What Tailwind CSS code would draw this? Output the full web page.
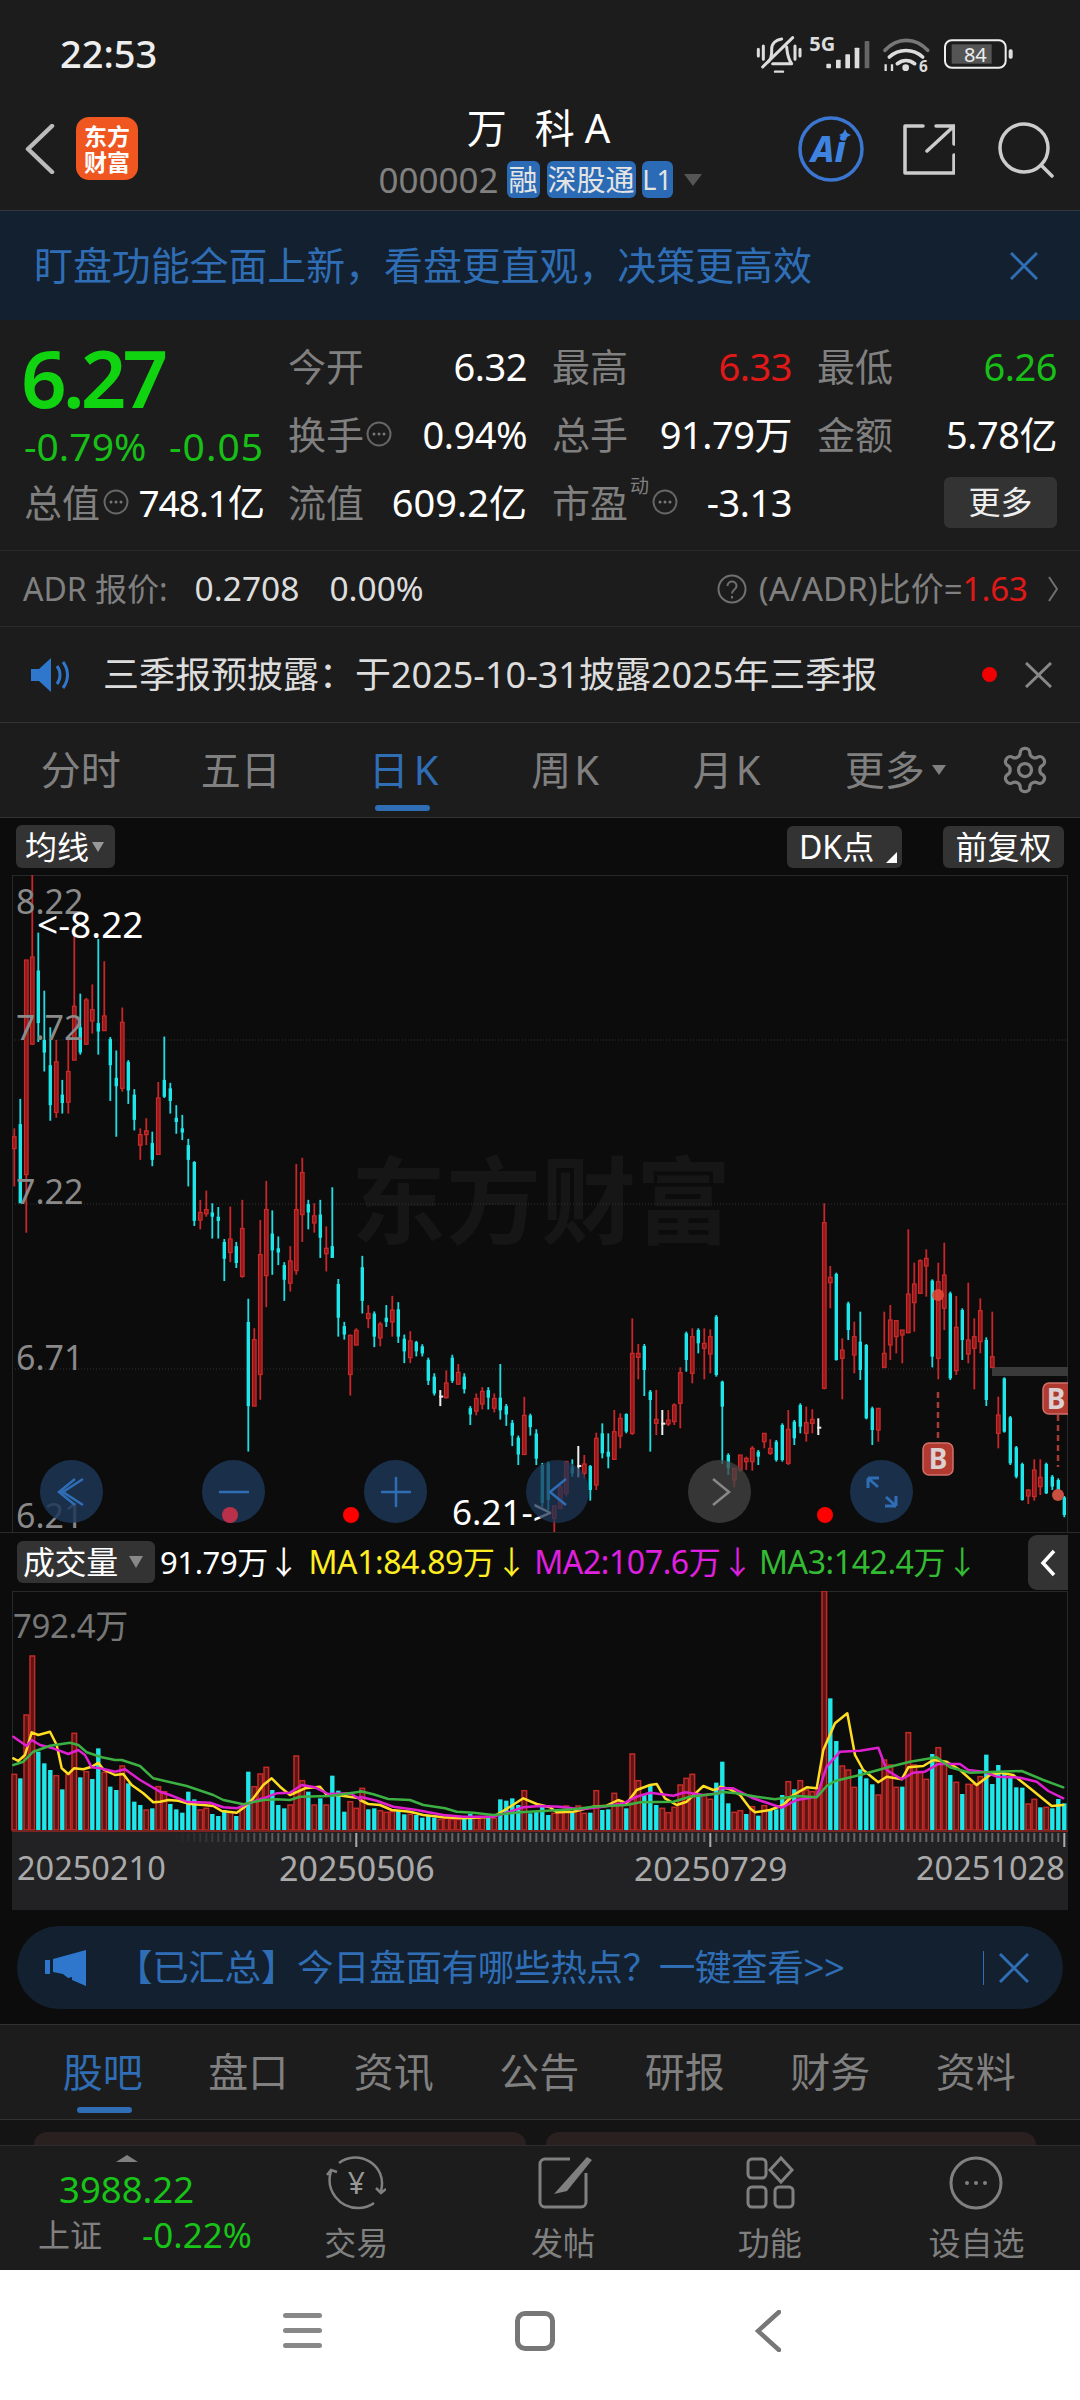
<!DOCTYPE html>
<html lang="zh-CN">
<head>
    <meta charset="UTF-8">
    <meta name="viewport" content="width=device-width, initial-scale=1.0">
    <title>万科A</title>
    <script src="https://cdn.jsdelivr.net/npm/@tailwindcss/browser@4"></script>
</head>
<body class="w-[1080px] h-[2400px] overflow-hidden bg-[#1c1c1c] text-white leading-none [font-family:'Noto_Sans','Noto_Sans_CJK_SC',sans-serif]">

    <svg class="hidden">
        <symbol id="dots" viewBox="0 0 26 26">
            <circle cx="13" cy="13" r="11.5" fill="none" stroke="#666" stroke-width="2"/>
            <circle cx="8" cy="13" r="1.5" fill="#777"/><circle cx="13" cy="13" r="1.5" fill="#777"/><circle cx="18" cy="13" r="1.5" fill="#777"/>
        </symbol>
    </svg>

    <!-- status bar + title -->
    <header class="h-[211px] border-b border-[#34383d]">
        <div class="h-[106px] flex items-center justify-between pl-[60px]">
            <span class="text-[38px] font-medium text-[#eee]">22:53</span>
            <svg class="w-[340px] h-[45px]" viewBox="0 0 1020 135">
                <g fill="none" stroke="#ddd" stroke-width="9" stroke-linecap="round" stroke-linejoin="round">
                    <path d="M55 55v20M70 45v40M165 45v40M180 55v20"/>
                    <path d="M85 92c12-12 10-25 10-38 0-16 12-28 30-30M140 48c2 18 2 32 15 50H98"/>
                    <path d="M68 108 158 20"/>
                    <path d="M105 122h24" stroke-width="7"/>
                </g>
                <text x="208" y="60" font-size="60" font-weight="700" fill="#ddd">5G</text>
                <g fill="#ddd">
                    <rect x="259" y="98" width="14" height="14" rx="3"/><rect x="288" y="86" width="14" height="26" rx="2"/><rect x="316" y="70" width="14" height="42" rx="2"/><rect x="344" y="50" width="14" height="62" rx="2"/>
                    <rect x="374" y="30" width="14" height="82" rx="2" fill="#666"/>
                </g>
                <g fill="none" stroke-width="11" stroke-linecap="round">
                    <path d="M435 58c36-40 92-40 128 0" stroke="#777"/>
                    <path d="M448 78c28-26 72-26 100 0" stroke="#ddd"/>
                    <path d="M472 98c16-12 36-12 52 0" stroke="#ddd"/>
                </g>
                <circle cx="497" cy="110" r="10" fill="#ddd"/>
                <path d="M437 100v20M456 100v20" stroke="#ddd" stroke-width="7" fill="none"/>
                <text x="537" y="122" font-size="46" font-weight="700" fill="#ddd">6</text>
                <rect x="615" y="28" width="182" height="82" rx="20" fill="none" stroke="#eee" stroke-width="6"/>
                <rect x="635" y="40" width="120" height="58" fill="#555"/>
                <rect x="806" y="55" width="12" height="28" rx="5" fill="#ddd"/>
                <text x="706" y="92" text-anchor="middle" font-size="60" fill="#eee">84</text>
            </svg>
        </div>
        <div class="relative h-[104px] grid grid-cols-[1fr_auto_1fr]">
            <div class="flex items-start pl-[25px] pt-[11px]">
                <svg class="w-[30px] h-[50px] mt-[7px]" viewBox="0 0 30 50" fill="none" stroke="#bbb" stroke-width="4.5" stroke-linecap="round" stroke-linejoin="round"><path d="M27 2 3 25l24 23"/></svg>
                <div class="ml-[21px] w-[62px] h-[63px] rounded-[13px] bg-[#f0561f] flex flex-col items-center justify-center text-[23px] font-bold leading-[26px] text-white"><span>东方</span><span>财富</span></div>
            </div>
            <div class="flex flex-col items-center pt-[1px]">
                <div class="h-[42px] flex items-center text-[40px] text-white -ml-[3px]">万<span class="ml-[28px]">科</span><span class="ml-[10px]">A</span></div>
                <div class="mt-[12px] flex items-center h-[37px]">
                    <span class="text-[35px] text-[#808080] mr-[8px]">000002</span>
                    <span class="h-[37px] px-[2px] rounded-[6px] bg-[#2b6ab5] text-[29px] text-[#e4e4e4] flex items-center">融</span>
                    <span class="h-[37px] ml-[7px] px-[1px] rounded-[6px] bg-[#2b6ab5] text-[29px] text-[#e4e4e4] flex items-center">深股通</span>
                    <span class="h-[37px] ml-[6px] w-[31px] justify-center rounded-[6px] bg-[#2b6ab5] text-[27px] text-[#e4e4e4] flex items-center">L1</span>
                    <span class="ml-[11px] w-0 h-0 border-x-[9px] border-x-transparent border-t-[12px] border-t-[#555]"></span>
                </div>
            </div>
            <div class="flex items-start justify-end pt-[10px] pr-[26px]">
                <svg class="w-[66px] h-[66px]" viewBox="0 0 66 66">
                    <circle cx="33" cy="33" r="31" fill="none" stroke="#3b76d0" stroke-width="3.5"/>
                    <text x="13" y="46" font-size="36" font-weight="800" font-style="italic" fill="#3f83e0">Ai</text>
                    <path d="M47 13l2 4 4 2-4 2-2 4-2-4-4-2 4-2z" fill="#3f83e0"/>
                </svg>
                <svg class="ml-[39px] mt-[7px] w-[52px] h-[52px]" viewBox="0 0 52 52" fill="none" stroke="#ccc" stroke-width="3.5" stroke-linecap="round" stroke-linejoin="round">
                    <path d="M20 3H2v47h49V32"/><path d="M24 28 51 3M33 3h18v18"/>
                </svg>
                <svg class="ml-[43px] mt-[6px] w-[56px] h-[56px]" viewBox="0 0 56 56" fill="none" stroke="#ccc" stroke-width="3.5" stroke-linecap="round">
                    <circle cx="26" cy="26" r="24"/><path d="m43 43 11 11"/>
                </svg>
            </div>
        </div>
    </header>

    <!-- feature banner -->
    <div class="h-[109px] bg-[#13202f] flex items-center justify-between pl-[34px] pr-[42px]">
        <span class="text-[38.9px] text-[#2f6db5]">盯盘功能全面上新，看盘更直观，决策更高效</span>
        <svg class="w-[28px] h-[28px]" viewBox="0 0 28 28" fill="none" stroke="#2f6db5" stroke-width="3"><path d="M1 1l26 26M27 1 1 27"/></svg>
    </div>

    <!-- quote -->
    <section class="h-[231px] flex pl-[24px] pt-[12px] border-b border-[#2a2a2a]">
        <div class="w-[240px] flex flex-col">
            <div class="h-[90px] flex items-center -ml-[3px] text-[80px] font-semibold tracking-[-4px] text-[#10d410]">6.27</div>
            <div class="h-[46px] flex items-center justify-between text-[39px] text-[#17bf17]"><span>-0.79%</span><span class="tracking-[1px]">-0.05</span></div>
            <div class="h-[68px] flex items-center text-[38px] text-[#808080]">
                总值<svg class="w-[26px] h-[26px] ml-[3px]"><use href="#dots"/></svg>
                <span class="ml-auto text-[37px] text-white tracking-[-1px]">748.1亿</span>
            </div>
        </div>
        <div class="ml-[24px] grid grid-cols-[239px_240px_240px] grid-rows-[68px_68px_68px] gap-x-[25px] text-[38px] text-[#808080]">
            <div class="flex items-center justify-between">今开<span class="text-[38px] text-white tracking-[-0.5px]">6.32</span></div>
            <div class="flex items-center justify-between">最高<span class="text-[38px] text-[#e01818] tracking-[-0.5px]">6.33</span></div>
            <div class="flex items-center justify-between">最低<span class="text-[38px] text-[#17bf17] tracking-[-0.5px]">6.26</span></div>
            <div class="flex items-center">换手<svg class="w-[26px] h-[26px] ml-[2px]"><use href="#dots"/></svg><span class="ml-auto text-[38px] text-white tracking-[-0.5px]">0.94%</span></div>
            <div class="flex items-center justify-between">总手<span class="text-[38px] text-white tracking-[-0.5px]">91.79万</span></div>
            <div class="flex items-center justify-between">金额<span class="text-[38px] text-white tracking-[-0.5px]">5.78亿</span></div>
            <div class="flex items-center">流值<span class="ml-auto text-[38px] text-white">609.2亿</span></div>
            <div class="relative flex items-center">市盈<span class="absolute left-[78px] top-[9px] text-[19px]">动</span><svg class="w-[26px] h-[26px] ml-[24px]"><use href="#dots"/></svg><span class="ml-auto text-[38px] text-white tracking-[-0.5px]">-3.13</span></div>
            <div class="flex items-center justify-end"><span class="w-[113px] h-[51px] rounded-[6px] bg-[#333] text-[32px] text-[#eee] flex items-center justify-center">更多</span></div>
        </div>
    </section>

    <!-- ADR -->
    <div class="h-[76px] flex items-center pl-[23px] pr-[22px] border-b border-[#2a2a2a] text-[32px] text-[#808080]">
        <span>ADR 报价:</span>
        <span class="ml-[27px] text-[33.5px] text-[#ddd]">0.2708</span>
        <span class="ml-[30px] text-[33.5px] text-[#ddd]">0.00%</span>
        <svg class="ml-auto w-[30px] h-[30px]" viewBox="0 0 30 30" fill="none" stroke="#707070" stroke-width="2"><circle cx="15" cy="15" r="13.5"/><path d="M10.5 12c0-6 9-6 9 0 0 4-4.500 3.500-4.500 7.500M15 22v2.500"/></svg>
        <span class="ml-[12px] text-[33px]">(A/ADR)比价=</span><span class="text-[33px] text-[#e01818]">1.63</span>
        <svg class="ml-[20px] w-[10px] h-[26px]" viewBox="0 0 10 26" fill="none" stroke="#707070" stroke-width="2"><path d="M1 1l8 12-8 12"/></svg>
    </div>

    <!-- notice -->
    <div class="h-[96px] flex items-center pl-[31px] pr-[28px] border-b border-[#333]">
        <svg class="w-[42px] h-[34px]" viewBox="0 0 42 34">
            <path d="M0 11h8L20 0v34L8 23H0z" fill="#2f77cc"/>
            <path d="M26 8c4 5 4 13 0 18M32 4c6 8 6 18 0 26" fill="none" stroke="#2f77cc" stroke-width="3"/>
        </svg>
        <span class="ml-[30px] text-[36px] text-[#ddd]">三季报预披露：于2025-10-31披露2025年三季报</span>
        <span class="ml-auto w-[15px] h-[15px] rounded-full bg-[#f00000]"></span>
        <svg class="ml-[28px] w-[27px] h-[26px]" viewBox="0 0 27 26" fill="none" stroke="#888" stroke-width="3"><path d="M1 1l25 24M26 1 1 25"/></svg>
    </div>

    <!-- period tabs -->
    <nav class="relative h-[95px] grid grid-cols-[repeat(6,161.5px)_111px] items-center border-b border-[#333] text-[40px] text-[#808080]">
        <span class="text-center">分时</span>
        <span class="text-center -ml-[3px]">五日</span>
        <span class="text-center text-[#2f6db5]">日<span class="ml-[5px]">K</span></span>
        <span class="text-center">周<span class="ml-[3px]">K</span></span>
        <span class="text-center">月<span class="ml-[3px]">K</span></span>
        <span class="flex items-center justify-center ml-[14px]">更多<i class="ml-[7px] w-0 h-0 border-x-[7px] border-x-transparent border-t-[10px] border-t-[#808080]"></i></span>
        <svg class="mx-auto w-[52px] h-[52px]" viewBox="0 0 24 24" fill="none" stroke="#808080" stroke-width="1.5"><path d="M12.22 2h-.44a2 2 0 0 0-2 2v.18a2 2 0 0 1-1 1.73l-.43.25a2 2 0 0 1-2 0l-.15-.08a2 2 0 0 0-2.730.73l-.22.38a2 2 0 0 0 .73 2.73l.15.1a2 2 0 0 1 1 1.72v.51a2 2 0 0 1-1 1.74l-.15.09a2 2 0 0 0-.73 2.73l.22.38a2 2 0 0 0 2.73.73l.15-.08a2 2 0 0 1 2 0l.43.25a2 2 0 0 1 1 1.73V20a2 2 0 0 0 2 2h.44a2 2 0 0 0 2-2v-.18a2 2 0 0 1 1-1.73l.43-.25a2 2 0 0 1 2 0l.15.08a2 2 0 0 0 2.73-.73l.22-.39a2 2 0 0 0-.73-2.73l-.15-.08a2 2 0 0 1-1-1.74v-.5a2 2 0 0 1 1-1.74l.15-.09a2 2 0 0 0 .73-2.73l-.22-.38a2 2 0 0 0-2.73-.73l-.15.08a2 2 0 0 1-2 0l-.43-.25a2 2 0 0 1-1-1.73V4a2 2 0 0 0-2-2z"/><circle cx="12" cy="12" r="3"/></svg>
        <span class="absolute left-[375px] top-[82px] w-[55px] h-[6px] rounded-full bg-[#2f6db5]"></span>
    </nav>

    <!-- chart toolbar -->
    <div class="h-[57px] bg-[#0c0c0c] flex items-center pl-[16px] pr-[16px] text-[32px] text-white">
        <span class="w-[99px] h-[43px] rounded-[6px] bg-[#333] flex items-center pl-[9px]">均线<i class="ml-[3px] w-0 h-0 border-x-[6px] border-x-transparent border-t-[10px] border-t-[#999]"></i></span>
        <span class="relative ml-auto w-[115px] h-[42px] rounded-[6px] bg-[#333] flex items-center pl-[12px]">DK点<i class="absolute right-[5px] bottom-[5px] w-0 h-0 border-l-[11px] border-l-transparent border-b-[11px] border-b-white"></i></span>
        <span class="ml-[41px] w-[121px] h-[42px] rounded-[6px] bg-[#333] flex items-center justify-center">前复权</span>
    </div>

    <!-- k-line chart -->
    <section class="relative h-[657px] bg-[#0c0c0c]">
        <span class="absolute left-[351px] top-[278px] text-[95px] font-bold text-[#161616]">东方财富</span>
        <svg id="kline" class="absolute inset-0 w-[1080px] h-[657px]" viewBox="0 875 1080 657"></svg>
        <span class="absolute left-[16px] top-[9px] text-[34px] text-[#8a8a8a]">8.22</span>
        <span class="absolute left-[16px] top-[135px] text-[34px] text-[#8a8a8a]">7.72</span>
        <span class="absolute left-[16px] top-[299px] text-[34px] text-[#8a8a8a]">7.22</span>
        <span class="absolute left-[16px] top-[465px] text-[34px] text-[#8a8a8a]">6.71</span>
        <span class="absolute left-[16px] top-[623px] text-[34px] text-[#8a8a8a]">6.21</span>
        <span class="absolute left-[37px] top-[30px] text-[37px] text-white">&lt;-8.22</span>
        <span class="absolute left-[452px] top-[619px] text-[35px] text-white">6.21-&gt;</span>
        <div class="absolute left-[40px] top-[585px] w-[873px] flex justify-between">
            <span class="w-[63px] h-[63px] rounded-full bg-[#1d3656]/85 flex items-center justify-center">
                <svg class="w-[30px] h-[30px]" viewBox="0 0 30 30" fill="none" stroke="#2f6db5" stroke-width="2.5"><path d="M26 2 6 15l20 13M18 2 2 15l16 13"/></svg>
            </span>
            <span class="relative w-[63px] h-[63px] rounded-full bg-[#1d3656]/85 flex items-center justify-center">
                <svg class="w-[32px] h-[32px]" viewBox="0 0 32 32" fill="none" stroke="#2f6db5" stroke-width="2.5"><path d="M1 16h30"/></svg>
                <i class="absolute left-[20px] top-[47px] w-[16px] h-[16px] rounded-full bg-[#b8304a]"></i>
            </span>
            <span class="w-[63px] h-[63px] rounded-full bg-[#1d3656]/85 flex items-center justify-center">
                <svg class="w-[32px] h-[32px]" viewBox="0 0 32 32" fill="none" stroke="#2f6db5" stroke-width="2.5"><path d="M1 16h30M16 1v30"/></svg>
            </span>
            <span class="w-[63px] h-[63px] rounded-full bg-[#1d3656]/75 flex items-center justify-center">
                <svg class="w-[32px] h-[32px]" viewBox="0 0 32 32" fill="none" stroke="#2f6db5" stroke-width="2.5"><path d="M24 3 8 16l16 13"/></svg>
            </span>
            <span class="w-[63px] h-[63px] rounded-full bg-[#444]/75 flex items-center justify-center">
                <svg class="w-[32px] h-[32px]" viewBox="0 0 32 32" fill="none" stroke="#888" stroke-width="2.5"><path d="M9 3l16 13L9 29"/></svg>
            </span>
            <span class="w-[63px] h-[63px] rounded-full bg-[#1d3656]/85 flex items-center justify-center">
                <svg class="w-[34px] h-[34px]" viewBox="0 0 34 34" fill="none" stroke="#2f6db5" stroke-width="3"><path d="M3 3l10 9M3 3v10M3 3h11M31 31l-10-9M31 31V21M31 31H20"/></svg>
            </span>
        </div>
    </section>

    <!-- volume legend -->
    <div class="h-[59px] bg-[#0c0c0c] border-t border-[#2a2a2a] flex items-center pl-[17px] text-[32px] tracking-[-0.4px]">
        <span class="w-[138px] h-[42px] rounded-[6px] bg-[#333] flex items-center pl-[6px] text-[32px] text-white">成交量<i class="ml-[11px] w-0 h-0 border-x-[7px] border-x-transparent border-t-[12px] border-t-[#888]"></i></span>
        <span class="ml-[5px] text-[31px] text-white">91.79万</span><span class="text-white">↓</span>
        <span class="ml-[9px] text-[#ffee22]">MA1:84.89万</span><span class="ml-[1px] text-[#ffee22]">↓</span>
        <span class="ml-[7px] text-[#e020e0]">MA2:107.6万</span><span class="ml-[1px] text-[#e020e0]">↓</span>
        <span class="ml-[6px] text-[#33bb33]">MA3:142.4万</span><span class="ml-[1px] text-[#33bb33]">↓</span>
        <span class="absolute left-[1028px] top-[1535px] w-[40px] h-[55px] rounded-l-[9px] bg-[#333] flex items-center justify-center">
            <svg class="w-[16px] h-[28px]" viewBox="0 0 16 28" fill="none" stroke="#fff" stroke-width="3.5"><path d="M14 2 3 14l11 12"/></svg>
        </span>
    </div>

    <!-- volume chart -->
    <section class="relative h-[241px] bg-[#0c0c0c]">
        <svg id="volume" class="absolute inset-0 w-[1080px] h-[241px]" viewBox="0 1591 1080 241"></svg>
        <span class="absolute left-[13px] top-[18px] text-[33px] tracking-[-0.4px] text-[#777]">792.4万</span>
    </section>

    <!-- date axis -->
    <div class="h-[78px] bg-[#0c0c0c] px-[12px]">
        <div class="relative h-full bg-[#222224]">
            <svg id="ticks" class="absolute inset-0 w-[1056px] h-[20px]" viewBox="12 1832 1056 20"></svg>
            <span class="absolute left-[5px] top-[20px] text-[32.5px] text-[#aaa]">20250210</span>
            <span class="absolute left-[267px] top-[19px] text-[34px] text-[#aaa]">20250506</span>
            <span class="absolute left-[622px] top-[20px] text-[33.5px] text-[#aaa]">20250729</span>
            <span class="absolute left-[904px] top-[20px] text-[32.5px] text-[#aaa]">20251028</span>
        </div>
    </div>

    <!-- promo pill -->
    <div class="h-[115px] bg-[#0c0c0c] pt-[16px] px-[17px] border-b border-[#333]">
        <div class="h-[83px] rounded-full bg-[#13202f] flex items-center pl-[28px] pr-[34px]">
            <svg class="w-[41px] h-[36px]" viewBox="0 0 41 36"><path d="M0 10h5v14H0zM8 9 41 0v36l-14-6v-3l-4 1-5-4-10-2z" fill="#2f77cc"/></svg>
            <span class="ml-[30px] text-[36.6px] text-[#2f6db5] tracking-[-0.4px]">【已汇总】今日盘面有哪些热点？一键查看&gt;&gt;</span>
            <span class="ml-auto w-[1px] h-[34px] bg-[#2f6db5]"></span>
            <svg class="ml-[15px] w-[30px] h-[30px]" viewBox="0 0 30 30" fill="none" stroke="#2f6db5" stroke-width="3"><path d="M1 1l28 28M29 1 1 29"/></svg>
        </div>
    </div>

    <!-- info tabs -->
    <nav class="relative h-[95px] pl-[30px] grid grid-cols-[repeat(7,145.5px)] items-center border-b border-[#333] text-[40px] text-[#808080]">
        <span class="text-center text-[#2f6db5]">股吧</span>
        <span class="text-center">盘口</span>
        <span class="text-center">资讯</span>
        <span class="text-center">公告</span>
        <span class="text-center">研报</span>
        <span class="text-center">财务</span>
        <span class="text-center">资料</span>
        <span class="absolute left-[77px] top-[82px] w-[55px] h-[6px] rounded-full bg-[#2f6db5]"></span>
    </nav>

    <!-- cards peeking out under the nav -->
    <div class="h-[25px] bg-[#141414] flex items-end pl-[34px] gap-[20px]">
        <span class="w-[492px] h-[13px] rounded-t-[24px] bg-[#2a201f]"></span>
        <span class="w-[490px] h-[13px] rounded-t-[24px] bg-[#2a201f]"></span>
    </div>

    <!-- bottom bar -->
    <nav class="h-[125px] border-t border-[#2c2c2c] grid grid-cols-[253px_repeat(4,206.700px)] text-[#808080]">
        <div class="relative">
            <i class="absolute left-[116px] top-[9px] w-0 h-0 border-x-[11px] border-x-transparent border-b-[7px] border-b-[#808080]"></i>
            <span class="absolute left-[59px] top-[25px] text-[36.5px] text-[#17c417]">3988.22</span>
            <span class="absolute left-[38px] top-[73px] text-[32px]">上证</span>
            <span class="absolute left-[142px] top-[71px] text-[35px] text-[#17c417]">-0.22%</span>
        </div>
        <div class="flex flex-col items-center pt-[7px]">
            <span class="relative w-[60px] h-[60px] flex items-center justify-center text-[30px] text-[#999]">
                <svg class="absolute inset-0" viewBox="0 0 60 60" fill="none" stroke="#808080" stroke-width="2.5"><path d="M5 18c-6 20 9 37 27 37 7 0 12-2 16-5M13 10c19-15 49 2 42 28M1 22l4-5 6 2M50 35l5 5 5-4"/></svg>
                ¥
            </span>
            <span class="mt-[14px] text-[32px]">交易</span>
        </div>
        <div class="flex flex-col items-center pt-[7px] -ml-[3px]">
            <svg class="w-[60px] h-[60px]" viewBox="0 0 60 60" fill="none" stroke="#808080" stroke-width="3"><path d="M38 6H13a5 5 0 0 0-5 5v38a5 5 0 0 0 5 5h36a5 5 0 0 0 5-5V20"/><path d="M55 4 60 7 35 38 22 41z" fill="#808080" stroke="none"/></svg>
            <span class="mt-[14px] ml-[3px] text-[32px]">发帖</span>
        </div>
        <div class="flex flex-col items-center pt-[7px]">
            <svg class="w-[60px] h-[60px]" viewBox="0 0 60 60" fill="none" stroke="#808080" stroke-width="3"><rect x="8" y="6" width="18" height="19" rx="4"/><path d="M41 5l11 12-11 12-11-12z"/><rect x="8" y="34" width="18" height="20" rx="4"/><rect x="35" y="34" width="18" height="20" rx="4"/></svg>
            <span class="mt-[14px] text-[32px]">功能</span>
        </div>
        <div class="flex flex-col items-center pt-[7px]">
            <svg class="w-[60px] h-[60px]" viewBox="0 0 60 60" fill="none" stroke="#808080" stroke-width="3"><circle cx="30" cy="30" r="25"/><circle cx="21" cy="30" r="2" fill="#808080" stroke="none"/><circle cx="30" cy="30" r="2" fill="#808080" stroke="none"/><circle cx="39" cy="30" r="2" fill="#808080" stroke="none"/></svg>
            <span class="mt-[14px] text-[32px]">设自选</span>
        </div>
    </nav>

    <!-- android nav -->
    <div class="h-[130px] bg-white relative">
        <div class="absolute left-[283px] top-[43px] w-[39px] flex flex-col gap-[10px]">
            <span class="h-[5px] rounded-full bg-[#888]"></span><span class="h-[5px] rounded-full bg-[#888]"></span><span class="h-[5px] rounded-full bg-[#888]"></span>
        </div>
        <span class="absolute left-[515px] top-[41px] w-[40px] h-[40px] rounded-[10px] border-[5px] border-[#777]"></span>
        <svg class="absolute left-[755px] top-[40px] w-[26px] h-[42px]" viewBox="0 0 26 42" fill="none" stroke="#777" stroke-width="4.500" stroke-linecap="round"><path d="M24 2 3 21l21 19"/></svg>
    </div>

    <script>
        // values are read off the reference: hi, body top, body bottom, low
        var k1 = "r590,610,638,728 c520,580,768,768 r190,190,700,838 r-12,183,390,392 c125,215,340,385 c263,380,410,455 c350,440,535,572 r380,432,552,565 c475,510,530,555 r380,455,528,555 r110,300,428,428 c270,350,410,415 r280,285,390,392 r248,308,335,365 c140,340,360,415 r193,323,358,358 c373,378,440,525 c405,470,490,610 r303,338,495,503 c428,432,500,532 c497,510,570,595 r590,605,630,665 r566,596,605,630 c598,625,665,680 r480,518,652,652 c372,475,515,518 c482,495,525,555 c535,565,575,603 c558,590,600,618 c615,630,665,728 c668,670,810,822 r760,790,808,830 r738,783,793,800 c768,790,800,852 c777,800,810,852 c853,860,900,953 r776,853,885,908 c860,870,910,922 r760,828,942,945 c995,1050,1250,1358 r1065,1092,1250,1250 r808,890,1175,1235 r715,783,940,1015 c785,840,880,938 c847,875,885,915 c908,915,950,1000 r870,905,958,978 r675,783,928,938 r660,695,795,860 c760,770,790,830 r768,798,815,838 c760,795,850,898 r823,875,888,930 c730,870,898,898 c948,960,1040,1085 c1050,1060,1080,1092 r1080,1082,1175,1225 r1065,1070,1105,1105 c893,920,1000,1030 r1010,1030,1042,1065 c1025,1030,1085,1110 r1050,1055,1088,1108 c1010,1040,1050,1062 r988,1022,1050,1085 c1003,1020,1085,1100 c1080,1090,1120,1148 r1072,1095,1135,1148 c1095,1098,1120,1132 c1103,1108,1125,1132 c1135,1140,1190,1200 c1172,1180,1220,1225 w1212,1225,1226,1250 r1165,1195,1230,1232 c1128,1135,1190,1195 r1150,1170,1198,1198 c1172,1180,1210,1220 c1250,1255,1270,1295 r1220,1232,1262,1272 r1205,1215,1245,1258 c1205,1212,1230,1258 r1220,1232,1255,1265 c1150,1230,1260,1282 c1245,1250,1270,1297 c1283,1290,1320,1345 c1320,1325,1365,1390 r1228,1272,1365,1365 c1268,1272,1300,1320 c1305,1315,1375,1390 c1385,1390,1480,1490";
        var k2 = "c965,970,1080,1110 r1095,1098,1135,1180 r1030,1040,1105,1108 r962,965,1060,1070 c958,980,1000,1010 w918,975,977,1012 r945,972,1000,1015 c975,978,1050,1082 r878,895,1035,1050 c850,880,940,955 c880,935,950,985 r810,875,958,960 r820,835,888,925 c820,822,875,880 r535,640,880,885 r612,640,652,718 c612,618,690,768 c750,755,780,935 r750,838,850,885 w810,848,850,885 r810,840,852,858 r790,795,845,855 r682,698,790,865 c575,580,660,695 r565,590,700,730 c565,570,610,640 r565,610,625,718 r568,590,642,700 c525,530,705,710 c722,725,800,972 c940,945,985,1005 r985,985,1020,1042 r945,945,990,995 r950,955,965,990 r918,925,965,992 c930,935,950,975 r880,880,905,925 r898,925,940,945 c900,905,960,965 c850,855,960,965 r810,868,970,975 c840,845,895,915 c790,795,860,880 r800,848,880,905 r808,838,850,880 w835,860,862,885 r190,248,745,748 r378,412,428,505 c398,402,660,662 r595,630,655,778 c485,490,570,600 r545,590,645,700 c515,605,690,720 c612,615,835,838 c800,805,870,915 r805,805,870,905 r515,640,682,685 r495,540,615,660 r540,542,590,640 r570,570,585,670 r268,462,578,580 r368,432,488,575 r358,362,460,462 r328,355,378,470 c418,422,650,682 r368,425,655,718 r308,405,505,570 c455,460,715,720 r468,562,692,705 c505,510,600,660 r428,600,642,670 r535,590,625,748 r475,512,605,640 c592,600,780,798 r515,650,682,685 r770,825,880,925 c712,715,875,878 c828,832,970,975 c918,922,1010,1015 c968,972,1080,1082 r1048,1050,1068,1092 r958,990,1070,1082 r958,1012,1040,1065 c968,972,1060,1062 c1005,1010,1040,1050 c1015,1020,1065,1078 c1068,1072,1125,1132";

        function rect(x, y, w, h, fill, extra) {
            return '<rect x="' + x + '" y="' + y + '" width="' + w + '" height="' + h + '" fill="' + fill + '" ' + (extra || '') + '/>';
        }

        var out = '';
        // frame + grid
        out += '<path d="M12 875.5H1068M12.5 875V1532M1067.500 875V1532" stroke="#26282a" fill="none"/>';
        [1040, 1204, 1369].forEach(function (y) {
            out += '<path d="M12 ' + y + 'H1068" stroke="#303030" stroke-dasharray="1 2"/>';
        });
        out += '<clipPath id="plot"><rect x="12" y="875" width="1056" height="657"/></clipPath><g clip-path="url(#plot)">';
        out += rect(992, 1367, 76, 9, '#3a3a3a');

        function candle(s, i, yOf) {
            var t = s[0], v = s.slice(1).split(',').map(Number);
            var x = 14.3 + 6 * i;
            var hi = yOf(v[0]), top = yOf(v[1]), bot = yOf(v[2]), lo = yOf(v[3]);
            if (t == 'w') return rect(x - 1, hi, 2, lo - hi, '#eee') + rect(x - 1, top, 4, 2, '#eee');
            if (t == 'c') return rect(x - 0.9, hi, 1.8, lo - hi, '#1fdfe4') + rect(x - 1.7, top, 3.4, bot - top, '#1fe6e8');
            return rect(x - 0.9, hi, 1.8, lo - hi, '#c8262a') + rect(x - 1.8, top, 3.6, Math.max(bot - top, 3), '#8f1a1b', 'stroke="#cc2a2a" stroke-width="1.2"');
        }
        k1.split(' ').forEach(function (s, i) { out += candle(s, i, function (y) { return 880 + y / 2.376; }); });
        k2.split(' ').forEach(function (s, i) { out += candle(s, i + 89, function (y) { return 1140 + y / 3; }); });

        // B markers
        out += '<path d="M938 1392V1443M1058 1415V1467" stroke="#a83a34" stroke-width="2.500" stroke-dasharray="6 4"/>';
        out += rect(923, 1443, 30, 32, '#b03a30', 'rx="6" stroke="#d07068" stroke-width="1.500"');
        out += rect(1043, 1383, 36, 31, '#b03a30', 'rx="6" stroke="#d07068" stroke-width="1.500"');
        out += '<text x="938" y="1469" text-anchor="middle" font-size="28" font-weight="700" fill="#ddd0d0">B</text>';
        out += '<text x="1056" y="1409" font-size="28" text-anchor="middle" font-weight="700" fill="#ddd0d0">B</text>';
        out += '<circle cx="938" cy="1295" r="6" fill="#e84a3a" opacity=".85"/><circle cx="1058" cy="1495" r="6" fill="#c85040"/>';
        out += '<circle cx="351" cy="1515" r="8" fill="#f00"/><circle cx="825" cy="1515" r="8" fill="#f00"/>';
        out += '</g>';
        document.getElementById('kline').innerHTML = out;

        // volume: r/c + bar top, crops at x = 0, 360, 720 of y 1680 (3x)
        var vols = "r283 c295 r105 r-72 c215 c250 c270 r287 c328 r283 r160 c292 r275 c297 c205 r277 c320 c330 r258 c310 c365 c375 r390 c385 r320 r335 c372 c388 c398 c335 c358 r390 r385 c402 c408 c390 r395 c408 r380 c275 r320 r282 r262 c330 c375 c385 r375 r228 r302 c335 r375 c355 r375 c287 c332 c395 r365 r385 " +
            "r325 c388 c385 r392 r397 r395 c392 c403 r403 c405 c413 c408 c413 r418 r415 r418 r418 c415 c402 r410 r410 c412 r415 c358 c362 c355 c375 r332 c400 c395 c378 c405 r400 r398 r378 c398 r378 r400 c398 r332 c390 c388 r340 r362 c385 r222 r302 c345 c318 c375 r385 r398 r382 r315 r295 r283 c345 r345 r358 c308 " +
            "c245 c370 r397 r392 c402 r380 c407 r377 c390 c388 c345 r305 c328 r302 r330 r335 r325 r-267 c55 c183 r258 r270 r322 c268 c295 c313 r345 r240 r255 r322 c320 r158 r255 r275 r298 c222 r203 r250 c285 r307 c342 r313 r313 r290 c224 c312 c255 c280 c290 c322 c323 r372 r358 c382 r382 c385 c357 c370";
        var v = '';
        v += '<path d="M12 1591.500H1068M12.500 1591V1832M1067.500 1591V1832" stroke="#26282a" fill="none"/>';
        vols.split(' ').forEach(function (s, i) {
            var x = 14.3 + 6 * i, top = 1680 + Number(s.slice(1)) / 3, h = 1830 - top;
            if (s[0] == 'c') v += rect(x - 2.200, top, 4.4, h, '#1fe6e8');
            else v += rect(x - 2.300, top, 4.6, h, '#5c1412', 'stroke="#c42b28" stroke-width="1.500"');
        });
        v += rect(12, 1830, 1056, 2, '#7a2422');

        function line(points, color) {
            return '<polyline points="' + points + '" fill="none" stroke="' + color + '" stroke-width="2.500" stroke-linejoin="round" stroke-linecap="round"/>';
        }
        function scale(list) {
            return list.map(function (p) { return (p[0] / 3).toFixed(1) + ',' + (1680 + p[1] / 3).toFixed(1); }).join(' ');
        }
        function shift(segs) {
            var all = [];
            segs.forEach(function (seg, n) {
                seg.forEach(function (p) { all.push([p[0] + n * 1080, p[1]]); });
            });
            return all;
        }
        var green = shift([
            [[40,255],[70,245],[100,215],[150,197],[210,188],[235,195],[260,217],[305,232],[345,240],[365,240],[420,258],[460,295],[560,318],[640,345],[670,360],[730,373],[790,360],[830,358],[870,360],[900,350],[990,348],[1080,335]],
            [[0,333],[40,343],[85,357],[150,360],[190,375],[255,385],[290,395],[340,398],[400,405],[480,397],[640,388],[700,380],[800,375],[840,367],[940,365],[990,350],[1080,340]],
            [[0,335],[50,340],[110,350],[165,358],[230,348],[290,352],[320,318],[345,303],[420,285],[510,260],[570,245],[650,232],[690,262],[750,278],[905,273],[970,300],[1030,322]]
        ]);
        var magenta = shift([
            [[40,170],[80,198],[95,180],[120,195],[160,205],[205,222],[235,210],[255,225],[275,262],[300,265],[345,275],[375,268],[420,300],[480,335],[510,345],[560,365],[630,368],[670,382],[710,385],[745,370],[790,355],[830,340],[870,338],[905,315],[945,322],[985,342],[1050,340],[1080,358]],
            [[0,350],[50,362],[100,380],[170,390],[250,405],[310,410],[400,410],[440,398],[490,382],[540,378],[600,380],[660,388],[730,380],[790,370],[830,350],[870,338],[940,347],[975,337],[1030,345],[1080,340]],
            [[0,325],[40,325],[100,355],[185,383],[230,360],[290,350],[320,260],[360,215],[420,212],[475,203],[500,270],[545,298],[580,278],[615,275],[655,252],[720,252],[745,270],[790,275],[830,290],[900,293],[950,305],[985,333],[1030,355]]
        ]);
        var yellow = shift([
            [[40,235],[55,243],[75,225],[95,157],[115,165],[150,155],[170,195],[185,265],[205,282],[222,265],[250,268],[275,260],[295,248],[310,268],[345,285],[370,282],[395,315],[430,340],[460,367],[480,365],[505,360],[535,362],[570,372],[610,375],[640,378],[665,393],[710,398],[735,380],[760,355],[790,315],[815,295],[840,320],[870,345],[915,325],[960,320],[980,345],[1010,345],[1080,355]],
            [[0,360],[25,372],[60,375],[95,390],[150,395],[190,405],[250,412],[310,415],[400,410],[450,380],[490,355],[530,372],[570,382],[590,397],[640,395],[700,380],[740,377],[775,360],[800,370],[830,330],[870,315],[890,312],[915,355],[950,375],[980,365],[1030,318],[1060,330],[1080,325]],
            [[0,320],[30,328],[60,345],[90,385],[105,397],[150,390],[190,375],[220,345],[260,322],[290,325],[310,210],[345,130],[382,100],[405,225],[430,270],[475,307],[500,290],[545,298],[565,262],[610,258],[640,240],[680,245],[720,270],[770,315],[810,285],[840,278],[880,285],[930,325],[995,378],[1030,375]]
        ]);
        v += line(scale(yellow), '#ffdd22') + line(scale(magenta), '#e020d0') + line(scale(green), '#3cb043');
        document.getElementById('volume').innerHTML = v;

        // ticks under the volume bars, fading out on the left
        var t = '';
        for (var i = 26; i < 176; i++) {
            var x = 14.3 + 6 * i;
            var long = i == 57 || i == 116 || i == 175;
            var o = Math.min(1, (i - 26) / 20);
            t += rect(x - 1, 1833, 2, long ? 14 : 9, long ? '#aaa' : '#666', 'opacity="' + (long ? 1 : o) + '"');
        }
        document.getElementById('ticks').innerHTML = t;
    </script>
</body>
</html>
